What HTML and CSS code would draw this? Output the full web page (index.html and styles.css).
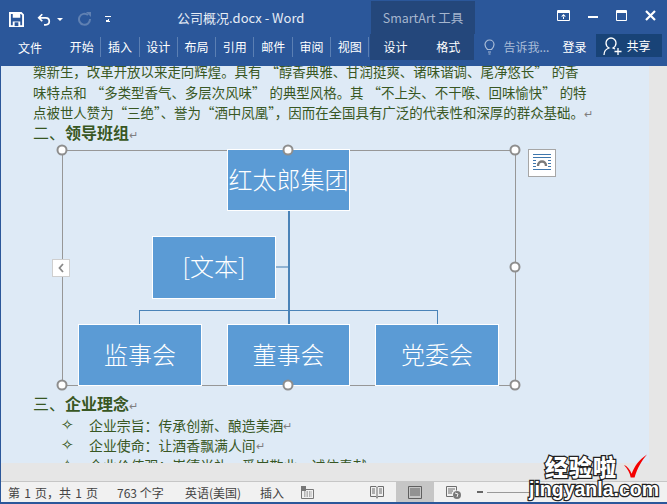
FILE: index.html
```html
<!DOCTYPE html>
<html lang="zh-CN">
<head>
  <meta charset="UTF-8" />
  <meta name="viewport" content="width=device-width, initial-scale=1" />
  <title>公司概况.docx - Word</title>
  <link rel="stylesheet" href="styles.css">
</head>
<body>
  <div class="window">
    <!-- TITULO -->
    <header class="titlebar">
      <div class="quick">
        <svg class="q-save" width="15" height="15" viewBox="0 0 16 16"><path d="M1 1h12l2 2v12H1z" fill="none" stroke="#fff" stroke-width="2"/><path d="M4 1h8v5H4zM4 10h8v5H4z" fill="#fff"/><path d="M6 11h4v4H6z" fill="#2b579a"/></svg>
        <svg class="q-undo" width="14" height="13" viewBox="0 0 16 14"><path d="M6 1 2 5l4 4M2 5h8c3 0 4 2 4 4s-1 4-4 4H8" fill="none" stroke="#fff" stroke-width="2"/></svg>
        <span class="q-drop"></span>
        <svg class="q-redo" width="14" height="14" viewBox="0 0 14 14"><path d="M10 3a5.500 5.500 0 1 0 2 4" fill="none" stroke="#5f80b2" stroke-width="2"/><path d="M8 0h5v5" fill="#5f80b2"/></svg>
        <span class="q-more"></span>
      </div>
      <div class="doc-title">公司概况.docx - Word</div>
      <div class="context-label">SmartArt 工具</div>
      <div class="win-btns">
        <svg width="13" height="11" viewBox="0 0 13 11"><path d="M.5.500h12v10H.5z" fill="none" stroke="#fff"/><path d="M1 1h11v2H1z" fill="#fff"/><path d="M6.500 4 4 6.500h5zM6 6h1v3H6z" fill="#fff"/></svg>
        <svg width="10" height="11" viewBox="0 0 10 11"><path d="M0 6h10v2H0z" fill="#fff"/></svg>
        <svg width="11" height="11" viewBox="0 0 11 11"><path d="M.5.500h10v10H.5z" fill="none" stroke="#fff"/><path d="M1 1h9v2H1z" fill="#fff"/></svg>
        <svg width="11" height="11" viewBox="0 0 11 11"><path d="m1 1 9 9M10 1l-9 9" stroke="#fff" stroke-width="2.200"/></svg>
      </div>
    </header>

    <!-- ABAS -->
    <nav class="ribbon">
      <span class="tab file-tab">文件</span>
      <span class="tab sep">开始</span>
      <span class="tab sep">插入</span>
      <span class="tab sep">设计</span>
      <span class="tab sep">布局</span>
      <span class="tab sep">引用</span>
      <span class="tab sep">邮件</span>
      <span class="tab sep">审阅</span>
      <span class="tab sep">视图</span>
      <div class="context-tabs">
        <span class="tab">设计</span>
        <span class="tab">格式</span>
      </div>
      <svg class="bulb" width="11" height="16" viewBox="0 0 11 16"><path d="M3.500 10.500C2 9 1 8 1 5.500a4.500 4.500 0 0 1 9 0c0 2.500-1 3.500-2.500 5zM4 13h3M4.500 15h2" fill="none" stroke="#a9bcd7" stroke-width="1.200"/></svg>
      <span class="tell">告诉我...</span>
      <span class="login">登录</span>
      <div class="share">
        <svg width="20" height="20" viewBox="0 0 20 20"><path d="M1 19c0-4 2-6 5-7-2-1-3-3-3-5a5 5 0 0 1 10 0c0 2-1 4-3 5l2 1" fill="none" stroke="#fff" stroke-width="1.300"/><path d="M15 12v7M11.500 15.500h7" stroke="#fff" stroke-width="1.300"/></svg>
        <span>共享</span>
      </div>
    </nav>

    <!-- DOCUMENTO -->
    <div class="workspace">
      <main class="doc">
        <p class="line">槊新生，改革开放以来走向辉煌。具有 “醇香典雅、甘润挺爽、诸味谐调、尾净悠长” 的香</p>
        <p class="line">味特点和 “多类型香气、多层次风味” 的典型风格。其 “不上头、不干喉、回味愉快” 的特</p>
        <p class="line">点被世人赞为“三绝”、誉为“酒中凤凰”，因而在全国具有广泛的代表性和深厚的群众基础。<span class="mark">↵</span></p>
        <h2 class="heading">二、<b>领导班组</b><span class="mark">↵</span></h2>

        <div class="chart">
          <div class="wire wire-trunk"></div>
          <div class="wire wire-side"></div>
          <div class="wire wire-bus"></div>
          <div class="wire wire-left"></div>
          <div class="wire wire-right"></div>
          <div class="node node-top">红太郎集团</div>
          <div class="node node-text">[文本]</div>
          <div class="node node-a">监事会</div>
          <div class="node node-b">董事会</div>
          <div class="node node-c">党委会</div>
          <span class="handle h-tl"></span>
          <span class="handle h-tc"></span>
          <span class="handle h-tr"></span>
          <span class="handle h-ml"></span>
          <span class="handle h-mr"></span>
          <span class="handle h-bl"></span>
          <span class="handle h-bc"></span>
          <span class="handle h-br"></span>
          <span class="pane-toggle"><svg width="6" height="10" viewBox="0 0 6 10"><path d="M5 1 1.500 5 5 9" fill="none" stroke="#8a8a8a" stroke-width="1.800"/></svg></span>
          <span class="layout-btn">
            <svg width="22" height="22" viewBox="0 0 22 22"><path d="M2 2.500h18M2 5.500h18M2 8.500h3M17 8.500h3M2 11.500h3M17 11.500h3M2 14.500h3M17 14.500h3M2 17.500h18" stroke="#3f77ad"/><path d="M7 14c0-6 8-6 8 0" fill="none" stroke="#7a7a7a" stroke-width="2.400"/></svg>
          </span>
        </div>

        <h2 class="heading heading-3">三、<b>企业理念</b><span class="mark">↵</span></h2>
        <p class="bullet"><span class="diamond">✧</span>企业宗旨：传承创新、酿造美酒<span class="mark">↵</span></p>
        <p class="bullet"><span class="diamond">✧</span>企业使命：让酒香飘满人间<span class="mark">↵</span></p>
        <p class="bullet"><span class="diamond">✧</span>企业价值观：崇德尚礼、爱岗敬业、诚信奉献<span class="mark">↵</span></p>
      </main>
      <div class="scroll-side"></div>
    </div>
    <div class="hscroll"></div>

    <!-- STATUS -->
    <footer class="status">
      <span class="st st-page">第 1 页，共 1 页</span>
      <span class="st st-count">763 个字</span>
      <span class="st st-lang">英语(美国)</span>
      <span class="st st-mode">插入</span>
      <svg class="st-macro" width="13" height="13" viewBox="0 0 13 13"><path d="M0 0h5v5H0z" fill="#777"/><path d="M.500 3.500h12v9H.5z" fill="none" stroke="#777"/><path d="M3 6h8M3 8h8M3 10h8" stroke="#777" stroke-dasharray="1.500 1"/></svg>
      <svg class="st-read" width="14" height="13" viewBox="0 0 14 13"><path d="M.5.500h5.500l1 1 1-1h5.500v10H8l-1 1-1-1H.5zM7 1.500v11M2 3h3M2 5h3M2 7h3M9 3h3M9 5h3M9 7h3" fill="none" stroke="#6d6d6d"/></svg>
      <span class="st-print"><svg width="14" height="13" viewBox="0 0 14 13"><path d="M.5.500h13v12H.5zM2 3h10M2 5h10M2 7h10M2 9h10" fill="none" stroke="#5f5f5f"/></svg></span>
      <svg class="st-web" width="15" height="13" viewBox="0 0 15 13"><path d="M7 10.500H.5V.500h10v4M2 3h7M2 5h5M2 7h4" fill="none" stroke="#6d6d6d"/><circle cx="11" cy="9" r="4" fill="#7a7a7a"/><path d="M9 7l3 1-1 3" fill="none" stroke="#f1f1f1"/></svg>
      <span class="zoom-minus"></span>
      <span class="zoom-track"></span>
    </footer>

    <!-- MARCA -->
    <div class="watermark">
      <div class="wm-top">
        <span>经验啦</span>
        <svg width="25" height="26" viewBox="0 0 26 26"><path d="M1 12c3 1 6 4 8 9C12 13 17 6 25 1c-6 7-10 14-13 24H8C7 20 5 16 1 12z" fill="#f40000"/></svg>
      </div>
      <div class="wm-site">jingyanla.com</div>
    </div>
  </div>
</body>
</html>
```

FILE: styles.css
```css
:root {
  --azul: #2b579a;
  --azul-contexto: #24477b;
  --azul-share: #184377;
  --papel: #deeaf6;
  --verde: #385723;
  --cinza: #e6e6e6;
  --node: #5b9bd5;
  --wire: #4a83b8;
}

* {
  box-sizing: border-box;
}

body {
  margin: 0;
  font-family: "Noto Sans CJK SC", "Liberation Sans", sans-serif;
}

.window {
  position: relative;
  width: 667px;
  height: 504px;
  overflow: hidden;
  display: flex;
  flex-direction: column;
  background: var(--azul);
  border-left: 1px solid var(--azul);
  border-bottom: 2px solid var(--azul);
}

/* titulo */
.titlebar {
  position: relative;
  flex: 0 0 34px;
  display: flex;
  align-items: flex-start;
  color: #fff;
}

.quick {
  display: flex;
  align-items: center;
  padding: 8px 0 0 8px;
  height: 30px;
}

.q-undo {
  margin-left: 13px;
}

.q-drop {
  margin-left: 6px;
  border-left: 3px solid transparent;
  border-right: 3px solid transparent;
  border-top: 3px solid #fff;
}

.q-redo {
  margin-left: 15px;
}

.q-more {
  margin-left: 13px;
  width: 6px;
  height: 6px;
  border-top: 1px solid #fff;
  background: linear-gradient(135deg, transparent 50%, #fff 50%) left bottom / 3px 3px no-repeat,
    linear-gradient(225deg, transparent 50%, #fff 50%) right bottom / 3px 3px no-repeat;
}

.doc-title {
  margin: 9px 0 0 66px;
  font-size: 13px;
  line-height: 18px;
  color: #e6ecf5;
  white-space: nowrap;
}

.context-label {
  position: absolute;
  left: 370px;
  top: 1px;
  width: 104px;
  height: 33px;
  padding-top: 8px;
  background: var(--azul-contexto);
  color: #a6b6ce;
  font-size: 12.500px;
  line-height: 18px;
  text-align: center;
}

.win-btns {
  margin-left: auto;
  display: flex;
  align-items: center;
  gap: 18px;
  padding: 10px 11px 0 0;
}

/* abas */
.ribbon {
  flex: 0 0 32px;
  display: flex;
  align-items: flex-start;
  color: #fff;
  font-size: 12px;
}

.tab {
  line-height: 26px;
  white-space: nowrap;
}

.file-tab {
  margin-left: 17px;
  width: 45px;
  padding-top: 1px;
}

.sep {
  width: 38.300px;
  border-right: 1px solid #5b7fb3;
  height: 20px;
  margin-top: 3px;
  line-height: 20px;
  text-align: center;
}

.context-tabs {
  margin-left: 1px;
  width: 104px;
  height: 26px;
  background: var(--azul-contexto);
  display: flex;
  justify-content: space-between;
  padding: 0 14px 0 13px;
}

.bulb {
  margin: 5px 0 0 10px;
}

.tell {
  margin-left: 8px;
  line-height: 26px;
  color: #a9bcd7;
}

.login {
  margin-left: 13px;
  line-height: 26px;
}

.share {
  margin-left: 10px;
  width: 66px;
  height: 23px;
  background: var(--azul-share);
  display: flex;
  align-items: center;
  gap: 3px;
  padding-left: 7px;
}

/* documento */
.workspace {
  flex: 1;
  display: flex;
  min-height: 0;
}

.doc {
  flex: 1;
  min-width: 0;
  overflow: hidden;
  background: var(--papel);
  color: var(--verde);
  font-size: 13.450px;
  padding-left: 32px;
}

.scroll-side {
  flex: 0 0 18px;
  background: var(--cinza);
}

.line {
  margin: 0;
  height: 20.500px;
  line-height: 20.500px;
  white-space: nowrap;
  word-spacing: 1px;
}

.line:first-child {
  margin-top: -5px;
}

.mark {
  color: #7f7f7f;
  font-size: 11px;
  font-weight: normal;
  line-height: 0;
}

.heading {
  margin: 0;
  height: 18px;
  font-size: 16px;
  line-height: 18px;
  font-weight: normal;
  white-space: nowrap;
}

.heading b {
  font-weight: bold;
}

/* diagrama */
.chart {
  position: relative;
  margin: 9.500px 0 0 29px;
  width: 454px;
  height: 236px;
  border: 1px solid #979797;
}

.node {
  position: absolute;
  display: flex;
  align-items: center;
  justify-content: center;
  background: var(--node);
  border: 1px solid #fff;
  color: #fff;
  font-size: 24px;
  font-family: "Noto Sans CJK SC", serif;
  font-weight: 300;
  padding-bottom: 4px;
}

.node-top {
  left: 164px;
  top: -2px;
  width: 123px;
  height: 62px;
}

.node-text {
  left: 89px;
  top: 85px;
  width: 124px;
  height: 63px;
  padding-bottom: 4px;
}

.node-a,
.node-b,
.node-c {
  top: 173px;
  height: 62px;
  width: 124px;
}

.node-a {
  left: 15px;
}

.node-b {
  left: 164px;
  width: 123px;
}

.node-c {
  left: 312px;
}

.wire {
  position: absolute;
  background: var(--wire);
}

.wire-trunk {
  left: 225px;
  top: 60px;
  width: 1.500px;
  height: 113px;
}

.wire-side {
  left: 213px;
  top: 115px;
  width: 12px;
  height: 2px;
  background: #8fb2d3;
}

.wire-bus {
  left: 76px;
  top: 159px;
  width: 298px;
  height: 1px;
}

.wire-left,
.wire-right {
  top: 159px;
  width: 1px;
  height: 14px;
}

.wire-left {
  left: 76px;
}

.wire-right {
  left: 374px;
}

.handle {
  position: absolute;
  width: 11px;
  height: 11px;
  border-radius: 50%;
  background: #fff;
  border: 2px solid #8e8e8e;
  transform: translate(-50%, -50%);
}

.h-tl,
.h-tc,
.h-tr {
  top: -1px;
}

.h-bl,
.h-bc,
.h-br {
  top: 234px;
}

.h-ml,
.h-mr {
  top: 116px;
}

.h-tl,
.h-ml,
.h-bl {
  left: -1px;
}

.h-tc,
.h-bc {
  left: 225px;
}

.h-tr,
.h-mr,
.h-br {
  left: 452px;
}

.pane-toggle {
  position: absolute;
  left: -11px;
  top: 108px;
  width: 18px;
  height: 18px;
  background: #fff;
  border: 1px solid #cfcfcf;
  display: flex;
  align-items: center;
  justify-content: center;
}

.layout-btn {
  position: absolute;
  left: 465px;
  top: -2px;
  width: 28px;
  height: 28px;
  background: #fff;
  border: 1px solid #a6a6a6;
  display: flex;
  align-items: center;
  justify-content: center;
}

.heading-3 {
  margin: 8px 0 3px;
}

.bullet {
  margin: 0;
  display: flex;
  align-items: center;
  height: 20px;
  line-height: 20px;
  padding-left: 28px;
  font-size: 13.900px;
  white-space: nowrap;
}

.diamond {
  width: 28px;
  font-size: 15px;
  font-family: "DejaVu Sans", sans-serif;
}

.hscroll {
  flex: 0 0 18px;
  background: var(--cinza);
}

/* status */
.status {
  position: relative;
  flex: 0 0 21px;
  display: flex;
  align-items: center;
  background: #f1f1f1;
  border-top: 1px solid #c6c6c6;
  color: #444;
  font-size: 12px;
  white-space: nowrap;
}

.st-page {
  margin-left: 7px;
  width: 109px;
  word-spacing: 1.500px;
}

.st-count {
  width: 68px;
}

.st-lang {
  width: 75px;
}

.st-mode {
  width: 41px;
}

.st-read {
  margin-left: 56px;
}

.st-print {
  margin-left: 12px;
  width: 38px;
  height: 20px;
  background: #c6c6c6;
  display: flex;
  align-items: center;
  justify-content: center;
}

.st-web {
  margin-left: 12px;
}

.zoom-minus {
  margin-left: 16px;
  width: 6px;
  height: 2px;
  background: #666;
}

.zoom-track {
  margin-left: 4px;
  width: 80px;
  height: 1px;
  background: #999;
}

/* marca */
.watermark {
  position: absolute;
  left: 528px;
  bottom: 3px;
  width: 125px;
  color: #fff;
  font-weight: 900;
  -webkit-text-stroke: 2.500px #222;
  paint-order: stroke fill;
}

.wm-top {
  display: flex;
  align-items: center;
  gap: 6px;
  padding-left: 16px;
  font-size: 23px;
  line-height: 26px;
  letter-spacing: 1px;
  height: 27px;
}

.wm-site {
  font-family: "Liberation Sans", sans-serif;
  font-size: 19.500px;
  line-height: 20px;
  font-weight: bold;
  white-space: nowrap;
}
```
